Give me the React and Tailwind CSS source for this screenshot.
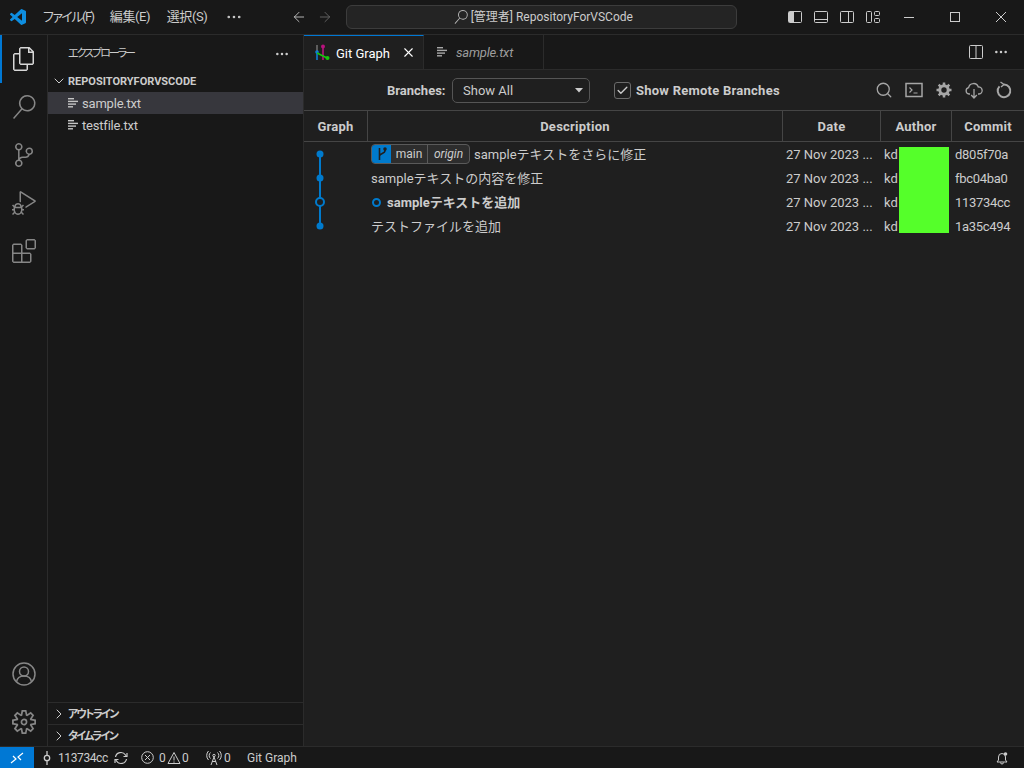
import React from 'react';
import { ChevronRight, ChevronDown, Ellipsis, X, Check, ArrowLeft, ArrowRight, Search } from 'lucide-react';

const FONT = "font-['Roboto','Noto_Sans_CJK_JP',sans-serif]";
const PALT = "[font-feature-settings:'palt']";

const PATHS = {
    files: 'M17.5 0h-9L7 1.5V6H2.5L1 7.5v15.07L2.5 24h12.07L16 22.57V18h4.7l1.3-1.43V4.5L17.5 0zm0 2.12l2.38 2.38H17.5V2.12zm-3 20.38h-12v-15H7v9.07L8.5 18h6v4.5zm6-6h-12v-15H16V6h4.5v10.5z',
    search: 'M15.25 0a8.25 8.25 0 0 0-6.18 13.72L1 22.88l1.12 1 8.05-9.12A8.251 8.251 0 1 0 15.25.01V0zm0 15a6.75 6.75 0 1 1 0-13.5 6.75 6.75 0 0 1 0 13.5z',
    scm: 'M21.007 8.222A3.738 3.738 0 0 0 15.045 5.2a3.737 3.737 0 0 0 1.156 6.583 2.988 2.988 0 0 1-2.668 1.67h-2.99a4.456 4.456 0 0 0-2.989 1.165V7.4a3.737 3.737 0 1 0-1.494 0v9.117a3.776 3.776 0 1 0 1.816.099 2.99 2.99 0 0 1 2.668-1.667h2.99a4.484 4.484 0 0 0 4.223-3.039 3.736 3.736 0 0 0 3.25-3.687zM4.565 3.738a2.242 2.242 0 1 1 4.484 0 2.242 2.242 0 0 1-4.484 0zm4.484 16.441a2.242 2.242 0 1 1-4.484 0 2.242 2.242 0 0 1 4.484 0zm8.221-9.715a2.242 2.242 0 1 1 0-4.485 2.242 2.242 0 0 1 0 4.485z',
    debug: 'M10.94 13.5l-1.32 1.32a3.73 3.73 0 0 0-7.24 0L1.06 13.5 0 14.56l1.72 1.72-.22.22V18H0v1.5h1.5v.08c.077.489.214.966.41 1.42L0 22.94 1.06 24l1.65-1.65A4.308 4.308 0 0 0 6 24a4.31 4.31 0 0 0 3.29-1.65L10.94 24 12 22.94 10.09 21c.198-.464.336-.951.41-1.45v-.05H12V18h-1.5v-1.5l-.22-.22L12 14.56l-1.06-1.06zM6 13.5a2.25 2.25 0 0 1 2.25 2.25h-4.5A2.25 2.25 0 0 1 6 13.5zm3 6a3.33 3.33 0 0 1-3 3 3.33 3.33 0 0 1-3-3v-2.25h6v2.25zm14.76-9.9v1.26L13.5 17.37v-1.8l8.5-5.37L9 2v9.46a5.07 5.07 0 0 0-1.5-.72V.63L8.64 0l15.12 9.6z',
    extensions: 'M13.5 1.5L15 0h7.5L24 1.5V9l-1.5 1.5H15L13.5 9V1.5zm1.5 0V9h7.5V1.5H15zM0 15V6l1.5-1.5H9L10.5 6v7.5H18l1.5 1.5v7.5L18 24H1.5L0 22.5V15zm9-1.5V6H1.5v7.5H9zM9 15H1.5v7.5H9V15zm1.5 7.5H18V15h-7.5v7.5z',
    gear: 'M19.85 8.75l4.15.83v4.84l-4.15.83 2.35 3.52-3.43 3.43-3.52-2.35-.83 4.15H9.58l-.83-4.15-3.52 2.35-3.43-3.43 2.35-3.52L0 14.42V9.58l4.15-.83L1.8 5.23 5.23 1.8l3.52 2.35L9.58 0h4.84l.83 4.15 3.52-2.35 3.43 3.43-2.35 3.52zm-1.57 5.07l4-.81v-2l-4-.81-.54-1.3 2.29-3.43-1.43-1.43-3.43 2.29-1.3-.54-.81-4h-2l-.81 4-1.3.54-3.43-2.29-1.43 1.43L6.38 8.9l-.54 1.3-4 .81v2l4 .81.54 1.3-2.29 3.43 1.43 1.43 3.43-2.29 1.3.54.81 4h2l.81-4 1.3-.54 3.43 2.29 1.43-1.43-2.29-3.43.54-1.3zm-8.186-4.672A3.43 3.43 0 0 1 12 8.57 3.44 3.44 0 0 1 15.43 12a3.43 3.43 0 1 1-5.336-2.852zm.956 4.274c.281.188.612.288.95.288A1.7 1.7 0 0 0 13.71 12a1.71 1.71 0 1 0-2.66 1.422z',
};

function ActivityIcon({ d, active, children }) {
    return (
        <div className="relative flex h-12 w-12 items-center justify-center">
            {active && <div className="absolute left-0 top-0 h-12 w-[2px] bg-[#0078d4]" />}
            <svg width="24" height="24" viewBox="0 0 24 24" fill={active ? '#d7d7d7' : '#868686'} fillRule="evenodd">
                {d ? <path d={d} /> : children}
            </svg>
        </div>
    );
}

function Logo() {
    return (
        <svg width="16" height="16" viewBox="0 0 24 24" fill="#0e8ee0">
            <path d="M23.15 2.587L18.21.21a1.494 1.494 0 0 0-1.705.29l-9.46 8.63-4.12-3.128a.999.999 0 0 0-1.276.057L.327 7.261A1 1 0 0 0 .326 8.74L3.899 12 .326 15.26a1 1 0 0 0 .001 1.479L1.65 17.94a.999.999 0 0 0 1.276.057l4.12-3.128 9.46 8.63a1.492 1.492 0 0 0 1.704.29l4.942-2.377A1.5 1.5 0 0 0 24 20.06V3.939a1.5 1.5 0 0 0-.85-1.352zm-5.146 14.861L10.826 12l7.178-5.448v10.896z" />
        </svg>
    );
}

function FileLines({ color = '#c5c5c5' }) {
    return (
        <svg width="12" height="12" viewBox="0 0 12 12" fill={color}>
            <rect x="1" y="1" width="6" height="1.4" />
            <rect x="1" y="3.7" width="10" height="1.4" />
            <rect x="1" y="6.4" width="8" height="1.4" />
            <rect x="1" y="9.1" width="5" height="1.4" />
        </svg>
    );
}

function LayoutIcon({ children }) {
    return (
        <div className="flex h-[26px] w-[26px] items-center justify-center">
            <svg width="16" height="16" viewBox="0 0 16 16" fill="none" stroke="#cccccc">
                {children}
            </svg>
        </div>
    );
}

function TitleBar() {
    return (
        <div className="flex h-[35px] shrink-0 items-center border-b border-[#2b2b2b] bg-[#181818] text-[13px] text-[#cccccc]">
            <div className="ml-[10px] w-[33px]"><Logo /></div>
            <span className={`w-[67px] tracking-[-1.5px] ${PALT}`}>ファイル(F)</span>
            <span className="w-[57px] tracking-[-0.4px]">編集(E)</span>
            <span className="w-[58px] tracking-[-0.4px]">選択(S)</span>
            <Ellipsis size={18} strokeWidth={1.5} className="text-[#cccccc]" />
            <ArrowLeft size={16} strokeWidth={1.3} className="ml-[48px] text-[#cccccc]" />
            <ArrowRight size={16} strokeWidth={1.3} className="ml-[10px] text-[#6b6b6b]" />
            <div className="ml-[13px] flex h-[24px] w-[392px] items-center justify-center gap-[3px] rounded-[6px] border border-[#3c3c3c] bg-[#242424] pl-[4px] text-[12px]">
                <svg width="14" height="14" viewBox="0 0 24 24" fill="#b5b5b5"><path d={PATHS.search} /></svg>
                <span>[管理者] RepositoryForVSCode</span>
            </div>
            <div className="ml-[45px] flex">
                <LayoutIcon>
                    <rect x="1.5" y="2.5" width="13" height="11" rx="1" />
                    <rect x="2" y="3" width="5" height="10" fill="#cccccc" stroke="none" />
                </LayoutIcon>
                <LayoutIcon>
                    <rect x="1.5" y="2.5" width="13" height="11" rx="1" />
                    <path d="M1.5 10.5h13" />
                </LayoutIcon>
                <LayoutIcon>
                    <rect x="1.5" y="2.5" width="13" height="11" rx="1" />
                    <path d="M9.5 2.5v11" />
                </LayoutIcon>
                <LayoutIcon>
                    <rect x="1.5" y="2.5" width="5" height="11" rx="1" />
                    <rect x="9.5" y="2.5" width="5" height="4" rx="1" />
                    <rect x="9.5" y="9.5" width="5" height="4" rx="1" />
                </LayoutIcon>
            </div>
            <div className="flex">
                <div className="flex w-[46px] justify-center">
                    <svg width="10" height="10" viewBox="0 0 10 10" stroke="#cccccc"><path d="M0 5.5h10" /></svg>
                </div>
                <div className="flex w-[46px] justify-center">
                    <svg width="10" height="10" viewBox="0 0 10 10" fill="none" stroke="#cccccc"><rect x="0.5" y="0.5" width="9" height="9" /></svg>
                </div>
                <div className="flex w-[46px] justify-center">
                    <svg width="10" height="10" viewBox="0 0 10 10" stroke="#cccccc"><path d="M0 0l10 10M10 0L0 10" /></svg>
                </div>
            </div>
        </div>
    );
}

function ActivityBar() {
    return (
        <div className="flex w-12 shrink-0 flex-col justify-between border-r border-[#2b2b2b] bg-[#181818]">
            <div>
                <ActivityIcon d={PATHS.files} active />
                <ActivityIcon d={PATHS.search} />
                <ActivityIcon d={PATHS.scm} />
                <ActivityIcon d={PATHS.debug} />
                <ActivityIcon d={PATHS.extensions} />
            </div>
            <div>
                <ActivityIcon>
                    <g fill="none" stroke="#868686" strokeWidth="1.5">
                        <circle cx="12" cy="12" r="11" />
                        <circle cx="12" cy="9.5" r="4.5" />
                        <path d="M4.5 20c.5-3.5 3-6 7.500-6s7 2.500 7.500 6" />
                    </g>
                </ActivityIcon>
                <ActivityIcon d={PATHS.gear} />
            </div>
        </div>
    );
}

function FileRow({ name, selected }) {
    return (
        <div className={`flex h-[22px] items-center pl-[19px] text-[13px] text-[#cccccc] ${selected ? 'bg-[#37373d]' : ''}`}>
            <FileLines />
            <span className="ml-[3px] pt-[2px] tracking-[-0.2px]">{name}</span>
        </div>
    );
}

function CollapsedPanel({ title }) {
    return (
        <div className="flex h-[22px] items-center border-t border-[#2b2b2b] pl-[3px] text-[11px] font-bold text-[#cccccc]">
            <ChevronRight size={16} strokeWidth={1.5} />
            <span className={`ml-[1px] pt-[4px] tracking-[-1.7px] ${PALT}`}>{title}</span>
        </div>
    );
}

function SideBar() {
    return (
        <div className="flex w-[256px] shrink-0 flex-col border-r border-[#2b2b2b] bg-[#181818]">
            <div className="flex h-[35px] items-center justify-between pl-[20px] pr-[13px] text-[11px] text-[#cccccc]">
                <span className={`pt-[4px] tracking-[-2px] ${PALT}`}>エクスプローラー</span>
                <Ellipsis size={16} strokeWidth={1.8} className="mt-[2px]" />
            </div>
            <div className="flex h-[22px] items-center pl-[3px] text-[11px] font-bold text-[#cccccc]">
                <ChevronDown size={16} strokeWidth={1.5} />
                <span className="ml-[1px] pt-[2px]">REPOSITORYFORVSCODE</span>
            </div>
            <FileRow name="sample.txt" selected />
            <FileRow name="testfile.txt" />
            <div className="flex-1" />
            <CollapsedPanel title="アウトライン" />
            <CollapsedPanel title="タイムライン" />
        </div>
    );
}

function GitGraphIcon() {
    return (
        <svg width="16" height="18" viewBox="0 0 16 18" fill="none" strokeWidth="1.6">
            <path d="M3 1v6" stroke="#6e6e6e" />
            <path d="M3 7v9" stroke="#0e7fd6" />
            <circle cx="3" cy="8" r="1.8" fill="#0e7fd6" />
            <path d="M9 2v14" stroke="#b8127e" />
            <circle cx="9" cy="2.500" r="2" fill="#b8127e" />
            <path d="M3 9l10 5" stroke="#16c60c" />
            <circle cx="13.500" cy="14" r="2" fill="#16c60c" />
        </svg>
    );
}

function TabBar() {
    return (
        <div className="flex h-[35px] shrink-0 items-stretch border-b border-[#2b2b2b] bg-[#181818] text-[13px]">
            <div className="flex w-[120px] items-center border-r border-t border-r-[#2b2b2b] border-t-[#0078d4] bg-[#1f1f1f] pl-[10px] text-white">
                <GitGraphIcon />
                <span className="ml-[6px] w-[65px] pt-[2px]">Git Graph</span>
                <X size={15} strokeWidth={1.8} />
            </div>
            <div className="flex w-[120px] items-center border-r border-[#2b2b2b] pl-[12px] text-[#9d9d9d]">
                <FileLines color="#a8a8a8" />
                <span className="ml-[8px] pt-[2px] italic tracking-[-0.2px]">sample.txt</span>
            </div>
            <div className="flex flex-1 items-center justify-end gap-[9px] pr-[15px] text-[#cccccc]">
                <svg width="16" height="16" viewBox="0 0 16 16" fill="none" stroke="#cccccc">
                    <rect x="1.500" y="1.500" width="13" height="13" rx="1" />
                    <path d="M8 1.500v13" />
                </svg>
                <Ellipsis size={16} strokeWidth={1.8} />
            </div>
        </div>
    );
}

function ToolIcon({ children }) {
    return (
        <svg width="18" height="18" viewBox="0 0 18 18" fill="none" stroke="#a6a6a6" strokeWidth="1.500">
            {children}
        </svg>
    );
}

function Toolbar() {
    return (
        <div className="flex h-[41px] shrink-0 items-center border-b border-[#454545] pl-[83px] text-[13px] text-[#cccccc]">
            <span className="w-[65px] pt-[2px] font-bold">Branches:</span>
            <div className="flex h-[25px] w-[138px] items-center justify-between rounded-[5px] border border-[#555555] pl-[10px] pr-[6px]">
                <span className="pt-[2px]">Show All</span>
                <svg width="8" height="5" viewBox="0 0 8 5" fill="#cccccc"><path d="M0 0h8L4 4.500z" /></svg>
            </div>
            <div className="ml-[24px] flex h-[17px] w-[17px] items-center justify-center rounded-[3px] border border-[#6b6b6b]">
                <Check size={13} strokeWidth={2.5} />
            </div>
            <span className="ml-[5px] w-[239px] pt-[2px] font-bold tracking-[0.25px]">Show Remote Branches</span>
            <div className="flex items-center gap-[12px]">
                <Search size={18} strokeWidth={1.7} className="text-[#a6a6a6]" />
                <ToolIcon>
                    <rect x="1" y="2.500" width="16" height="13" />
                    <path d="M4.500 6.500l2.500 2.500-2.500 2.500M8.500 12h4" strokeWidth="1.200" />
                </ToolIcon>
                <ToolIcon>
                    <circle cx="9" cy="9" r="4.200" strokeWidth="3" />
                    <path d="M9 1.500v3M9 13.500v3M1.500 9h3M13.500 9h3M3.700 3.700l2.100 2.100M12.200 12.200l2.100 2.100M14.300 3.700l-2.100 2.100M5.800 12.200l-2.100 2.100" strokeWidth="2.500" />
                </ToolIcon>
                <ToolIcon>
                    <path d="M5 13H4a3.200 3.200 0 0 1-.4-6.300A5 5 0 0 1 13.300 6 3.500 3.500 0 0 1 14 13h-1" strokeWidth="1.300" />
                    <path d="M9 8v9M6.200 14l2.800 3 2.800-3" strokeWidth="1.300" />
                </ToolIcon>
                <ToolIcon>
                    <path d="M9 3.500a6.300 6.300 0 1 1-4.500 1.900" strokeWidth="2" />
                    <path d="M5.500 1l3.500 2.500-3 2.500" strokeWidth="1.400" />
                </ToolIcon>
            </div>
        </div>
    );
}

const COMMITS = [
    { msg: 'sampleテキストをさらに修正', hash: 'd805f70a', refs: true },
    { msg: 'sampleテキストの内容を修正', hash: 'fbc04ba0' },
    { msg: 'sampleテキストを追加', hash: '113734cc', head: true },
    { msg: 'テストファイルを追加', hash: '1a35c494' },
];

const COLS = 'grid grid-cols-[415px_98px_71px_72px]';
const HEAD_CELL = 'flex items-center justify-center pt-[2px] tracking-[0.25px]';

function RefBadge() {
    return (
        <div className="mr-[4px] flex h-[20px] items-stretch overflow-hidden rounded-[4px] border border-[#5a5a5a] bg-[#2d2d2d] text-[12px]">
            <div className="flex w-[19px] items-center justify-center bg-[#007acc]">
                <svg width="12" height="14" viewBox="0 0 12 14" fill="none" stroke="#1f1f1f" strokeWidth="1.600">
                    <path d="M3.500 1v12M9 1v3c0 2.500-5.500 2.500-5.500 5" />
                    <circle cx="9" cy="2" r="1" fill="#1f1f1f" />
                </svg>
            </div>
            <span className="flex w-[37px] items-center justify-center border-r border-[#5a5a5a]">main</span>
            <span className="flex w-[41px] items-center justify-center italic">origin</span>
        </div>
    );
}

function CommitRow({ commit }) {
    return (
        <div className={`${COLS} h-[24px] items-center whitespace-nowrap pl-[3px] text-[13px] text-[#cccccc]`}>
            <div className="flex items-center">
                {commit.refs && <RefBadge />}
                {commit.head && <span className="ml-[1px] mr-[6px] h-[9px] w-[9px] rounded-full border-2 border-[#007acc]" />}
                <span className={`pt-[2px] ${commit.head ? 'font-bold' : ''}`}>{commit.msg}</span>
            </div>
            <span className="pt-[2px]">27 Nov 2023 ...</span>
            <span className="pt-[2px]">kd</span>
            <span className="pt-[2px] tracking-[-0.3px]">{commit.hash}</span>
        </div>
    );
}

function GitGraphTable() {
    return (
        <div className="relative flex-1 text-[13px] text-[#cccccc]">
            <div className="grid h-[31px] grid-cols-[64px_415px_98px_71px_72px] border-b border-[#454545] text-center font-bold">
                <div className={`${HEAD_CELL} border-r border-[#454545]`}>Graph</div>
                <div className={`${HEAD_CELL} border-r border-[#454545]`}>Description</div>
                <div className={`${HEAD_CELL} border-r border-[#454545]`}>Date</div>
                <div className={`${HEAD_CELL} border-r border-[#454545]`}>Author</div>
                <div className={HEAD_CELL}>Commit</div>
            </div>
            <div className="flex">
                <svg width="64" height="96" viewBox="0 0 64 96" fill="#007acc" className="shrink-0">
                    <path d="M16 12v72" stroke="#007acc" strokeWidth="2" />
                    <circle cx="16" cy="12" r="3.500" />
                    <circle cx="16" cy="36" r="3.500" />
                    <circle cx="16" cy="60" r="4" fill="#1f1f1f" stroke="#007acc" strokeWidth="2" />
                    <circle cx="16" cy="84" r="3.500" />
                </svg>
                <div className="flex-1">
                    {COMMITS.map((c) => <CommitRow key={c.hash} commit={c} />)}
                </div>
            </div>
            <div className="absolute left-[595px] top-[36px] h-[86px] w-[50px] bg-[#55ff2a]" />
        </div>
    );
}

function StatusBar() {
    return (
        <div className="flex h-[22px] shrink-0 items-center border-t border-[#2b2b2b] bg-[#181818] text-[12px] text-[#cccccc]">
            <div className="flex h-full w-[34px] items-center justify-center bg-[#0078d4]">
                <svg width="14" height="14" viewBox="0 0 14 14" fill="none" stroke="#ffffff" strokeWidth="1.200">
                    <path d="M1 12l5-4-3-3M13 2L8 6l3 3" />
                </svg>
            </div>
            <svg width="12" height="16" viewBox="0 0 12 16" fill="none" stroke="#cccccc" strokeWidth="1.300" className="ml-[7px]">
                <circle cx="6" cy="8" r="2.700" />
                <path d="M6 1v4.300M6 10.700V15" />
            </svg>
            <span className="ml-[5px] w-[49px] tracking-[-0.4px]">113734cc</span>
            <svg width="16" height="16" viewBox="0 0 16 16" fill="none" stroke="#cccccc" strokeWidth="1.200" className="ml-[6px]">
                <path d="M2.500 7a5.500 5.500 0 0 1 10-2l1 1.500M13.500 9a5.500 5.500 0 0 1-10 2l-1-1.500" />
                <path d="M14 3v3.500h-3.500M2 13V9.500h3.500" />
            </svg>
            <svg width="15" height="15" viewBox="0 0 15 15" fill="none" stroke="#cccccc" className="ml-[11px]">
                <circle cx="7.500" cy="7.500" r="5.800" />
                <path d="M5 5l5 5M10 5l-5 5" />
            </svg>
            <span className="ml-[4px] w-[7px]">0</span>
            <svg width="14" height="14" viewBox="0 0 14 14" fill="none" stroke="#cccccc" className="ml-[1px]">
                <path d="M7 1.500l6 11H1z" />
                <path d="M7 5.500v4M7 10.500v1.200" />
            </svg>
            <span className="ml-[1px] w-[7px]">0</span>
            <svg width="16" height="16" viewBox="0 0 16 16" fill="none" stroke="#cccccc" className="ml-[17px]">
                <circle cx="8" cy="5.500" r="1.200" />
                <path d="M8 7l-3 8M8 7l3 8M6 11.500h4M4.500 2.500a4 4 0 0 0 0 6M11.500 2.500a4 4 0 0 1 0 6M2.500 1a6.500 6.500 0 0 0 0 9M13.500 1a6.500 6.500 0 0 1 0 9" />
            </svg>
            <span className="ml-[2px] w-[7px]">0</span>
            <span className="ml-[16px]">Git Graph</span>
            <svg width="14" height="14" viewBox="0 0 14 14" fill="none" stroke="#cccccc" className="ml-auto mr-[15px]">
                <path d="M2 11h10l-1.500-2V6a3.500 3.500 0 0 0-7 0v3zM5.500 11.500a1.500 1.500 0 0 0 3 0" />
                <circle cx="10.500" cy="3" r="1.800" fill="#cccccc" stroke="none" />
            </svg>
        </div>
    );
}

export default function App() {
    return (
        <div className={`flex h-screen w-screen flex-col overflow-hidden bg-[#1f1f1f] ${FONT}`}>
            <TitleBar />
            <div className="flex min-h-0 flex-1">
                <ActivityBar />
                <SideBar />
                <div className="flex min-w-0 flex-1 flex-col">
                    <TabBar />
                    <Toolbar />
                    <GitGraphTable />
                </div>
            </div>
            <StatusBar />
        </div>
    );
}
